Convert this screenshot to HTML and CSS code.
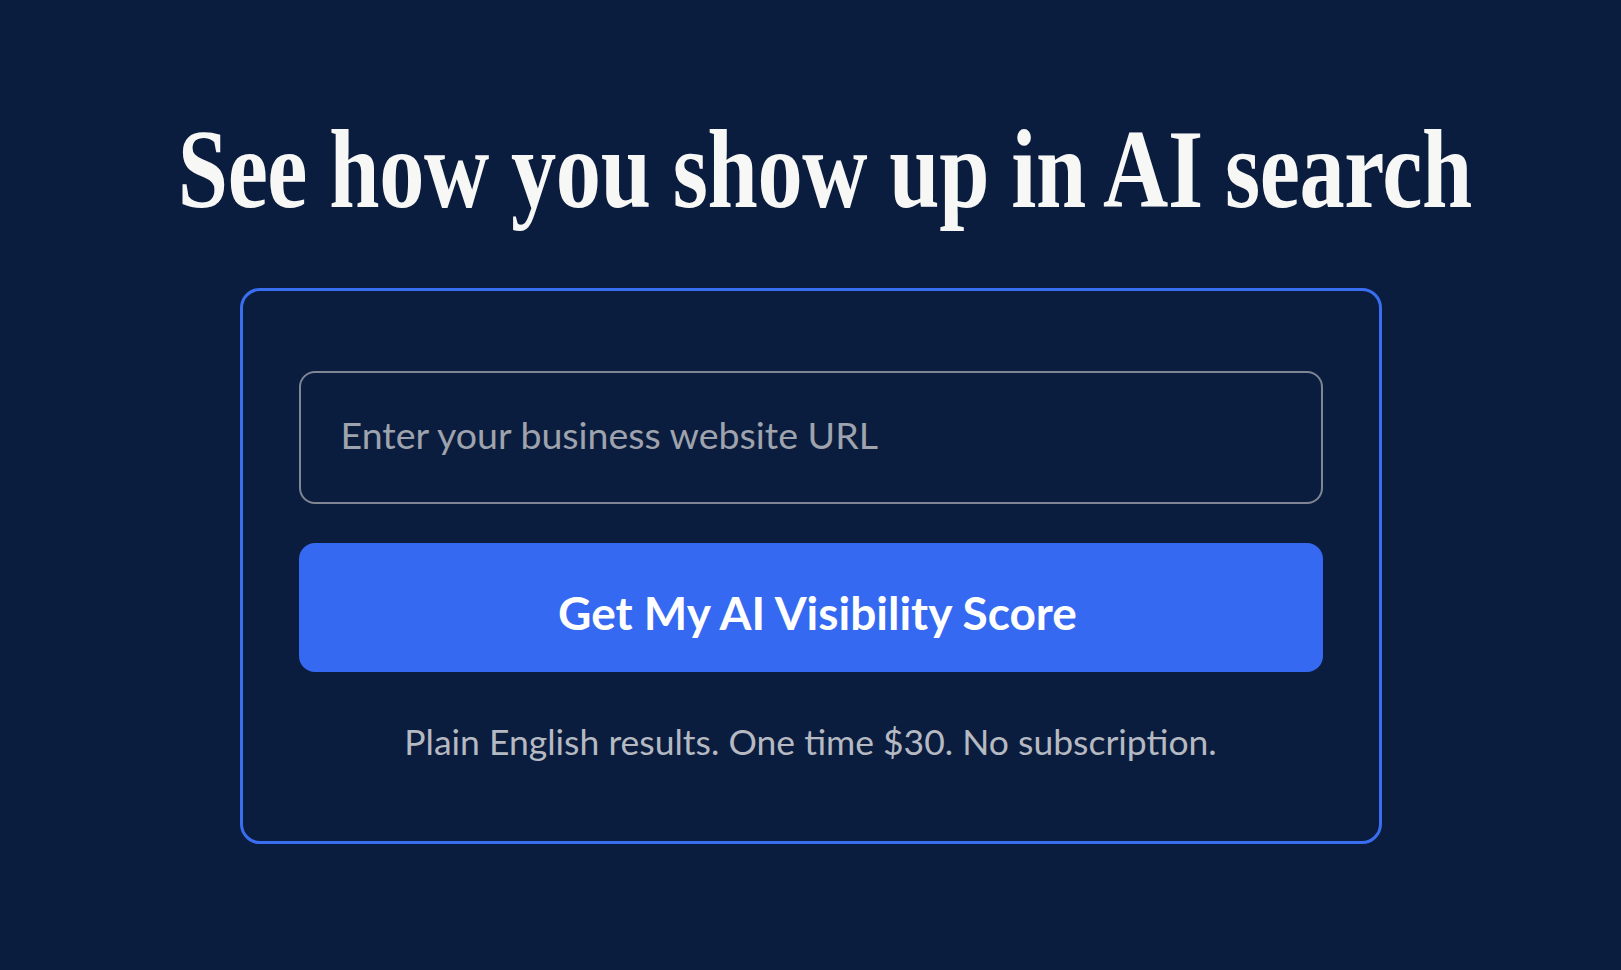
FILE: index.html
```html
<!DOCTYPE html>
<html lang="en">
<head>
<meta charset="utf-8">
<title>AI Visibility Score</title>
<link rel="stylesheet" href="styles.css">
</head>
<body>
<main class="page">
  <h1 class="headline"><span class="headline-text">See how you show up in AI search</span></h1>
  <form class="card" onsubmit="return false;">
    <input class="url-input" type="text" placeholder="Enter your business website URL">
    <button class="cta" type="submit">Get My AI Visibility Score</button>
    <p class="note">Plain English results. One time $30. No subscription.</p>
  </form>
</main>
</body>
</html>
```

FILE: styles.css
```css
html, body {
  margin: 0;
  padding: 0;
}

body {
  background: #0b1d3e;
  min-height: 100vh;
  font-family: "Lato", "Roboto", sans-serif;
  color: #ffffff;
  overflow-x: hidden;
}

.page {
  display: flex;
  flex-direction: column;
  align-items: center;
  padding-top: 112px;
}

.headline {
  box-sizing: border-box;
  margin: 0;
  padding-left: 28px;
  display: flex;
  justify-content: center;
  font-family: "Liberation Serif", "Times New Roman", serif;
  font-weight: 700;
  font-size: 113px;
  line-height: 1;
  color: #f7f7f5;
  white-space: nowrap;
  width: 100%;
}

.headline-text {
  display: block;
  flex: none;
  transform: scaleX(0.8);
  transform-origin: center;
  letter-spacing: -0.5px;
}

.card {
  box-sizing: border-box;
  width: 1142px;
  margin-top: 63px;
  border: 3px solid #3a6ef0;
  border-radius: 20px;
  padding: 80px 56px 77px;
  display: flex;
  flex-direction: column;
  align-items: stretch;
}

.url-input {
  box-sizing: border-box;
  height: 133px;
  border: 2px solid #7f8593;
  border-radius: 16px;
  background: transparent;
  padding: 0 40px 6px;
  font-family: "Lato", "Roboto", sans-serif;
  font-size: 37.5px;
  color: #e6e8ec;
  outline: none;
}

.url-input::placeholder {
  color: #9ea3ad;
  opacity: 1;
}

.cta {
  box-sizing: border-box;
  height: 129px;
  margin-top: 39px;
  border: none;
  border-radius: 16px;
  background: #3669f1;
  color: #ffffff;
  font-family: "Lato", "Roboto", sans-serif;
  font-weight: 700;
  font-size: 46px;
  padding: 10px 0 0 14px;
  cursor: pointer;
}

.note {
  margin: 49px 0 0;
  text-align: center;
  font-size: 35.5px;
  line-height: 1.2;
  color: #b5b9c2;
}
```
